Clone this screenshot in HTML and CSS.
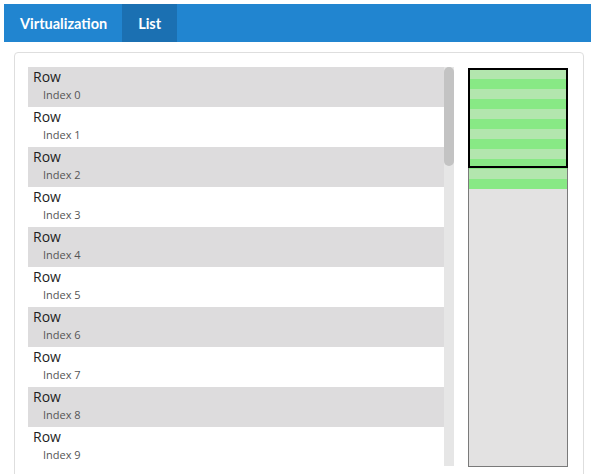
FILE: index.html
```html
<!DOCTYPE html>
<html>
<head>
<meta charset="utf-8">
<link rel="stylesheet" href="styles.css">
</head>
<body>
<nav class="navbar">
  <span class="brand">Virtualization</span>
  <span class="tab active">List</span>
</nav>
<main class="card">
  <div class="viewport">
    <div class="list" id="list"></div>
    <div class="scrollbar"><div class="thumb"></div></div>
  </div>
  <div class="minimap">
    <div class="minimap-rows" id="minimap"></div>
    <div class="minimap-view"></div>
  </div>
</main>
<script src="app.js"></script>
</body>
</html>
```
FILE: styles.css
```css
* { box-sizing: border-box; }
html, body { margin: 0; padding: 0; background: #fff; }
body {
  padding: 4px 4px 0 4px;
  font-family: "Open Sans", "Noto Sans", sans-serif;
  overflow: hidden;
  height: 474px;
}
.navbar {
  display: flex;
  align-items: stretch;
  height: 38px;
  background: #2185d0;
  font-family: Lato, "Liberation Sans", sans-serif;
  font-weight: 700;
  font-size: 14.5px;
  color: #fff;
}
.brand {
  display: flex;
  align-items: center;
  padding: 0 15px 0 16px;
}
.tab {
  display: flex;
  align-items: center;
  padding: 0 16px;
}
.tab.active { background: #1b70b2; }
.card {
  display: flex;
  gap: 14px;
  margin: 10px 7px 0 10px;
  padding: 14px 15px 14px 13px;
  border: 1px solid #dedede;
  border-radius: 4px;
  height: 440px;
}
.viewport {
  display: flex;
  width: 426px;
  height: 399px;
  flex: none;
}
.list {
  flex: 1;
  overflow: hidden;
}
.scrollbar {
  width: 10px;
  background: #e6e6e6;
  flex: none;
}
.thumb {
  height: 99px;
  background: #c3c3c3;
  border-radius: 5px;
}
.row {
  height: 40px;
  padding: 1px 5px 0;
}
.row:nth-child(odd) { background: #dddcdd; }
.row-title {
  font-size: 14px;
  line-height: 18px;
  color: #1e1e1e;
}
.row-index {
  font-size: 11px;
  line-height: 18px;
  padding-left: 10px;
  color: #555;
}
.minimap {
  position: relative;
  width: 100px;
  height: 399px;
  margin-top: 1px;
  border: 1px solid #7a7a7a;
  background: #e3e2e2;
  flex: none;
}
.mm-row { height: 10px; }
.mm-row:nth-child(odd) { background: #b3e6ae; }
.mm-row:nth-child(even) { background: #88e985; }
.minimap-view {
  position: absolute;
  left: -1px;
  top: -1px;
  width: 100px;
  height: 100px;
  border: 2px solid #000;
}
```
FILE: app.js
```js
// Render the rows that fit the viewport, and the minimap stripes for the rendered window.
const list = document.getElementById('list');
const mini = document.getElementById('minimap');
for (let i = 0; i < 10; i++) {
  const row = document.createElement('div');
  row.className = 'row';
  row.innerHTML = '<div class="row-title">Row</div><div class="row-index">Index ' + i + '</div>';
  list.appendChild(row);
}
for (let i = 0; i < 12; i++) {
  const s = document.createElement('div');
  s.className = 'mm-row';
  mini.appendChild(s);
}
```
